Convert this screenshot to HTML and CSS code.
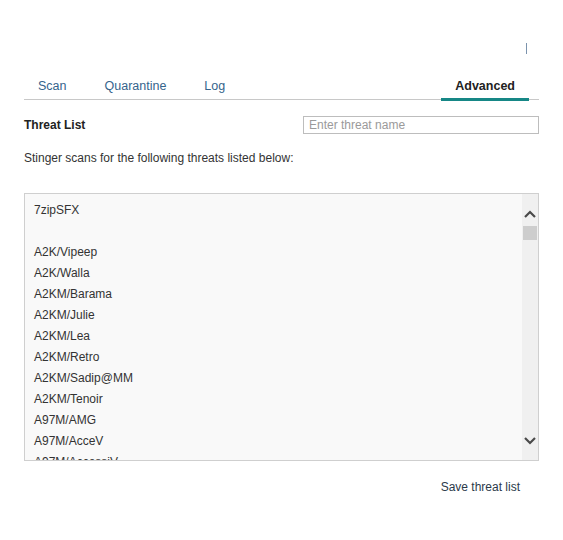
FILE: index.html
```html
<!DOCTYPE html>
<html lang="en">

<head>
    <meta charset="UTF-8">
    <title>Stinger - Advanced</title>
    <link rel="stylesheet" href="styles.css">
</head>

<body>
    <div class="page">
        <div class="topbar">
            <span class="top-mark"></span>
        </div>

        <div class="tabs">
            <a class="tab">Scan</a>
            <a class="tab">Quarantine</a>
            <a class="tab">Log</a>
            <a class="tab active">Advanced</a>
        </div>

        <div class="threat-head">
            <h2>Threat List</h2>
            <input type="text" class="search" placeholder="Enter threat name">
        </div>

        <p class="intro">Stinger scans for the following threats listed below:</p>

        <div class="list-box">
            <ul class="threats">
                <li>7zipSFX</li>
                <li>&nbsp;</li>
                <li>A2K/Vipeep</li>
                <li>A2K/Walla</li>
                <li>A2KM/Barama</li>
                <li>A2KM/Julie</li>
                <li>A2KM/Lea</li>
                <li>A2KM/Retro</li>
                <li>A2KM/Sadip@MM</li>
                <li>A2KM/Tenoir</li>
                <li>A97M/AMG</li>
                <li>A97M/AcceV</li>
                <li>A97M/AccessiV</li>
                <li>A97M/Accessiv.B</li>
            </ul>
            <div class="scrollbar">
                <svg class="arrow up" width="12" height="8" viewBox="0 0 12 8">
                    <path d="M1 7 L6 2 L11 7" fill="none" stroke="#4a4a4a" stroke-width="2.2"/>
                </svg>
                <div class="thumb"></div>
                <div class="track"></div>
                <svg class="arrow down" width="12" height="8" viewBox="0 0 12 8">
                    <path d="M1 1 L6 6 L11 1" fill="none" stroke="#4a4a4a" stroke-width="2.2"/>
                </svg>
            </div>
        </div>

        <div class="actions">
            <a class="save-link">Save threat list</a>
        </div>
    </div>
</body>

</html>
```

FILE: styles.css
```css
body {
    margin: 0;
    background-color: #ffffff;
    font-family: 'Liberation Sans', Arial, sans-serif;
    font-size: 12px;
    color: #333;
}

.page {
    width: 515px;
    margin-left: 24px;
}

.topbar {
    height: 70px;
    display: flex;
    justify-content: flex-end;
    align-items: flex-start;
}

.top-mark {
    width: 1px;
    height: 11px;
    margin-top: 43px;
    margin-right: 12px;
    background-color: #7b93ad;
}

.tabs {
    display: flex;
    gap: 10px;
    height: 29px;
    border-bottom: 1px solid #c8c8c8;
}

.tab {
    position: relative;
    padding: 9px 14px 0;
    line-height: 14px;
    font-size: 12.5px;
    color: #35648c;
    cursor: pointer;
}

.tab.active {
    margin-left: auto;
    margin-right: 10px;
    font-weight: bold;
    color: #222;
}

.tab.active::after {
    content: "";
    position: absolute;
    left: 0;
    right: 0;
    bottom: -2px;
    height: 3px;
    background-color: #168786;
}

.threat-head {
    display: flex;
    justify-content: space-between;
    align-items: center;
    margin-top: 16px;
}

.threat-head h2 {
    margin: 0;
    font-size: 12px;
    font-weight: bold;
    color: #222;
}

.search {
    box-sizing: border-box;
    width: 236px;
    height: 18px;
    margin: 0;
    padding: 0 5px;
    border: 1px solid #bdbdbd;
    font-family: 'Liberation Sans', Arial, sans-serif;
    font-size: 12px;
    color: #333;
}

.search::placeholder {
    color: #9a9a9a;
}

.intro {
    margin: 17px 0 0;
    line-height: 14px;
}

.list-box {
    display: flex;
    height: 266px;
    margin-top: 28px;
    border: 1px solid #cfcfcf;
    background-color: #f9f9f9;
    overflow: hidden;
}

.threats {
    flex: 1;
    margin: 0;
    padding: 6px 0 0 9px;
    list-style: none;
    overflow: hidden;
}

.threats li {
    line-height: 21px;
    color: #333;
}

.scrollbar {
    width: 16px;
    display: flex;
    flex-direction: column;
    align-items: center;
    background-color: #f0f0f0;
}

.arrow.up {
    margin-top: 16px;
}

.thumb {
    width: 14px;
    height: 14px;
    margin-top: 8px;
    background-color: #cdcdcd;
}

.track {
    flex: 1;
}

.arrow.down {
    margin-bottom: 15px;
}

.actions {
    display: flex;
    justify-content: flex-end;
    margin-top: 19px;
    padding-right: 19px;
}

.save-link {
    line-height: 14px;
    color: #2b3a4a;
    cursor: pointer;
}
```
